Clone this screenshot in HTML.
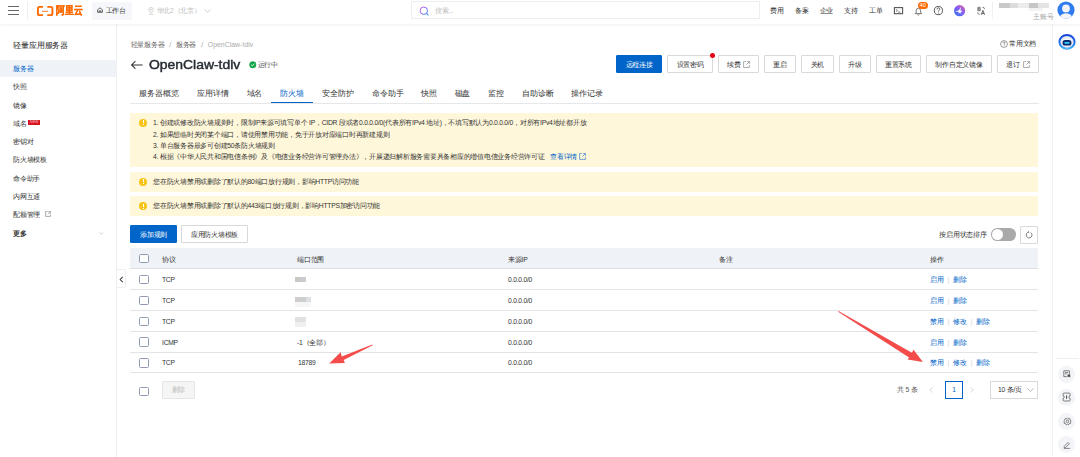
<!DOCTYPE html>
<html><head><meta charset="utf-8">
<style>
*{margin:0;padding:0;box-sizing:border-box}
html,body{width:1080px;height:457px;overflow:hidden;background:#fff}
body{font-family:"Liberation Sans",sans-serif;color:#333;position:relative;font-size:6.75px;line-height:1;letter-spacing:-0.25px}
.a{position:absolute;white-space:nowrap}
i{display:inline-block;width:1em;font-style:normal;text-align:center;letter-spacing:0}
svg.a{overflow:visible}
#top{position:absolute;left:0;top:0;width:1080px;height:24px;background:#fff;box-shadow:0 1px 3px rgba(0,0,0,.065);z-index:5}
.nav{position:absolute;top:7.9px;font-size:6.75px;color:#333}
#side{position:absolute;left:0;top:0;width:117px;height:457px;background:#fff;border-right:1px solid #eeeff1}
.si{position:absolute;left:13px;font-size:6.75px;color:#333}
#rail{position:absolute;left:1051.6px;top:24px;width:28.4px;height:433px;background:#fff;border-left:1.4px solid #f0f1f4}
.btn{position:absolute;top:55px;height:18px;border:1px solid #d9d9d9;background:#fff;font-size:6.75px;color:#333;text-align:center;line-height:17.2px;border-radius:1px}
.tab{position:absolute;top:89.6px;font-size:7.875px;color:#333;letter-spacing:0}
.alert{position:absolute;left:130px;width:908px;background:#fff7da}
.ico{position:absolute;width:8px;height:8px;border-radius:50%;background:#f9c419}
.ico:after{content:"";position:absolute;left:3.5px;top:1.7px;width:1px;height:2.7px;background:#fff}
.ico:before{content:"";position:absolute;left:3.5px;top:5.3px;width:1px;height:1px;background:#fff}
.at{position:absolute;left:153px;font-size:6.75px;color:#333}
.cb{position:absolute;left:139px;width:9.8px;height:9.4px;border:1px solid #8e9bb0;border-radius:1.6px;background:#fff}
.td{position:absolute;font-size:6.75px;color:#333}
.rl{position:absolute;left:130px;width:908px;height:1px;background:#e3e4e6}
.lk{color:#0064c8}
.sep{color:#d6d6d6;padding:0 4.1px}
.rc{position:absolute;left:1058px;width:17px;height:17px;border-radius:50%;background:#f3f4f7}
</style></head><body>

<div id="side">
  <div class="si" style="top:41.7px;font-size:7.875px;font-weight:500;color:#222;letter-spacing:0"><i>轻</i><i>量</i><i>应</i><i>用</i><i>服</i><i>务</i><i>器</i></div>
  <div class="a" style="left:0;top:59.6px;width:116px;height:17.9px;background:#eff3f8"></div>
  <div class="si" style="top:66.2px;color:#0064c8;font-weight:500"><i>服</i><i>务</i><i>器</i></div>
  <div class="si" style="top:84.4px"><i>快</i><i>照</i></div>
  <div class="si" style="top:102.6px"><i>镜</i><i>像</i></div>
  <div class="si" style="top:120.8px"><i>域</i><i>名</i></div>
  <div class="a" style="left:28.4px;top:119.8px;width:11.7px;height:5.1px;background:#d8141e;color:#f4c0d0;font-size:3.6px;line-height:5.1px;text-align:center;letter-spacing:0">NEW</div>
  <div class="si" style="top:139.2px"><i>密</i><i>钥</i><i>对</i></div>
  <div class="si" style="top:157.3px"><i>防</i><i>火</i><i>墙</i><i>模</i><i>板</i></div>
  <div class="si" style="top:175.5px"><i>命</i><i>令</i><i>助</i><i>手</i></div>
  <div class="si" style="top:193.6px"><i>内</i><i>网</i><i>互</i><i>通</i></div>
  <div class="si" style="top:211.6px"><i>配</i><i>额</i><i>管</i><i>理</i></div>
  <svg class="a" style="left:45.2px;top:211.2px" width="6" height="6" viewBox="0 0 6 6"><path d="M2.6 0.6H0.6V5.4H5.4V3.4M3.4 0.6H5.4V2.6M5.4 0.6L2.8 3.2" fill="none" stroke="#888" stroke-width="0.7"/></svg>
  <div class="si" style="top:230.7px;font-weight:bold;color:#333"><i>更</i><i>多</i></div>
  <svg class="a" style="left:98.6px;top:232.4px" width="5" height="3" viewBox="0 0 5 3"><path d="M0.5 0.5L2.3 2.3L4.1 0.5" fill="none" stroke="#b0b0b0" stroke-width="0.6"/></svg>
</div>
<!-- collapse tab -->
<div class="a" style="left:116.5px;top:269.2px;width:9.2px;height:19.2px;background:#fff;border:1px solid #eceef1;border-left:none;border-radius:0 2px 2px 0"></div>
<svg class="a" style="left:118.5px;top:275.5px" width="5" height="7" viewBox="0 0 5 7"><path d="M3.7 0.8L1.2 3.5L3.7 6.2" fill="none" stroke="#444" stroke-width="1.1"/></svg>

<div id="rail">
  <svg class="a" style="left:5px;top:9px" width="18" height="18" viewBox="0 0 18 18">
    <defs><linearGradient id="rg" x1="0" y1="0" x2="0" y2="1"><stop offset="0" stop-color="#1747d8"/><stop offset="0.55" stop-color="#1f6cf0"/><stop offset="1" stop-color="#3fb2f8"/></linearGradient></defs>
    <ellipse cx="9" cy="8.9" rx="7.6" ry="6.9" fill="#e4e8f0" stroke="url(#rg)" stroke-width="1.9"/>
    <ellipse cx="9" cy="9.4" rx="5.4" ry="4.4" fill="#f3f5f9"/>
    <rect x="4.5" y="7.1" width="9" height="5.4" rx="2.6" fill="#0a2a72"/>
    <rect x="6.3" y="8.9" width="5.4" height="1.8" rx="0.9" fill="#31d0f6"/>
    <circle cx="9" cy="15.9" r="1" fill="#8db2f2"/>
  </svg>
  <div class="a" style="left:3px;top:334px;width:23px;height:1px;background:#eef0f2"></div>
  <div class="rc" style="left:5.5px;top:341.5px"></div>
  <svg class="a" style="left:10.5px;top:346px" width="8" height="8" viewBox="0 0 8 8"><path d="M0.8 0.8H6.4V4.2M0.8 0.8V6.6H3.8M2 2.6H5M2 4H3.6" fill="none" stroke="#555" stroke-width="0.75"/><path d="M4.6 4.4H7.2V7.4L5.9 6.5L4.6 7.4Z" fill="#444"/></svg>
  <div class="rc" style="left:5.5px;top:365px"></div>
  <svg class="a" style="left:9px;top:368px" width="10" height="10" viewBox="0 0 10 10"><path d="M2.1 1.1H7.1Q8.1 1.1 8.1 2.1V3.85A1.2 1.2 0 0 0 8.1 6.25V8Q8.1 9 7.1 9H2.1Q1.1 9 1.1 8V6.25A1.2 1.2 0 0 0 1.1 3.85V2.1Q1.1 1.1 2.1 1.1Z" fill="none" stroke="#555" stroke-width="0.75"/><path d="M4.6 3.4V6.8" stroke="#444" stroke-width="1"/></svg>
  <div class="rc" style="left:5.5px;top:388.5px"></div>
  <svg class="a" style="left:10px;top:393px" width="9" height="9" viewBox="0 0 9 9"><path d="M4.5 0.8L5.4 1.8L6.8 1.6L7 3L8.1 3.9L7.4 5.1L7.6 6.5L6.2 6.7L5.3 7.9L4.5 7.2L3.3 7.9L2.6 6.7L1.2 6.5L1.4 5.1L0.8 3.9L1.8 3L2.1 1.6L3.5 1.8Z" fill="none" stroke="#555" stroke-width="0.7"/><circle cx="4.5" cy="4.4" r="1.3" fill="none" stroke="#555" stroke-width="0.7"/></svg>
  <div class="rc" style="left:5.5px;top:412px"></div>
  <svg class="a" style="left:10.5px;top:416.5px" width="8" height="8" viewBox="0 0 8 8"><path d="M1.2 5.4L5 1.4L6.4 2.8L2.6 6.6H1.2Z" fill="none" stroke="#555" stroke-width="0.7"/><path d="M0.8 7.4H7" stroke="#555" stroke-width="0.7"/></svg>
</div>

<div id="top">
  <div class="a" style="left:8px;top:6px;width:11px;height:1.1px;background:#666"></div>
  <div class="a" style="left:8px;top:10px;width:11px;height:1.1px;background:#666"></div>
  <div class="a" style="left:8px;top:14px;width:11px;height:1.1px;background:#666"></div>
  <div class="a" style="left:27.3px;top:2px;width:0.8px;height:17px;background:#efefef"></div>
  <svg class="a" style="left:36px;top:4.5px" width="19" height="12" viewBox="0 0 19 12">
    <path d="M7 1.9H3.6Q1.9 1.9 1.9 3.6V8.4Q1.9 10.1 3.6 10.1H7" fill="none" stroke="#ff6a00" stroke-width="1.9"/>
    <path d="M11.3 1.9H14.7Q16.4 1.9 16.4 3.6V8.4Q16.4 10.1 14.7 10.1H11.3" fill="none" stroke="#ff6a00" stroke-width="1.9"/>
    <path d="M6 6.3H12.2" stroke="#ff6a00" stroke-width="0.9"/>
  </svg>
  <div class="a" style="left:55.5px;top:5px;font-size:11.2px;font-weight:bold;color:#ff6a00;-webkit-text-stroke:0.3px #ff6a00;letter-spacing:0;transform:scaleX(0.8);transform-origin:0 0"><i>阿</i><i>里</i><i>云</i></div>
  <div class="a" style="left:92px;top:2px;width:40px;height:17.5px;background:#f5f7fb;border-radius:1px"></div>
  <svg class="a" style="left:96.6px;top:7px" width="6" height="6" viewBox="0 0 6 6"><path d="M0.6 2.8L3 0.8L5.4 2.8V5.3H0.6Z M2.2 5.3V3.8H3.8V5.3" fill="none" stroke="#444" stroke-width="0.8"/></svg>
  <div class="a" style="left:105.5px;top:7.5px;font-size:6.9px;color:#333"><i>工</i><i>作</i><i>台</i></div>
  <svg class="a" style="left:147.5px;top:6.5px" width="6" height="8" viewBox="0 0 6 8"><path d="M3 6.2Q0.7 3.9 0.7 2.7A2.3 2.3 0 0 1 5.3 2.7Q5.3 3.9 3 6.2Z" fill="none" stroke="#c4c4c4" stroke-width="0.7"/><circle cx="3" cy="2.7" r="0.8" fill="none" stroke="#c4c4c4" stroke-width="0.6"/><path d="M0.8 7.3H5.2" stroke="#c4c4c4" stroke-width="0.7"/></svg>
  <div class="a" style="left:156.5px;top:7.5px;font-size:6.75px;color:#bdbdbd"><i>华</i><i>北</i>2<i>（</i><i>北</i><i>京</i><i>）</i></div>
  <svg class="a" style="left:204px;top:9px" width="7" height="4" viewBox="0 0 7 4"><path d="M0.5 0.5L3.5 3.3L6.5 0.5" fill="none" stroke="#c4c4c4" stroke-width="0.8"/></svg>
  <div class="a" style="left:411px;top:1.2px;width:349px;height:18.3px;border:1px solid #eceff2;background:#fff"></div>
  <svg class="a" style="left:418.5px;top:5.5px" width="11" height="11" viewBox="0 0 11 11"><defs><linearGradient id="sg" x1="0" y1="0" x2="1" y2="1"><stop offset="0" stop-color="#d05ce8"/><stop offset="1" stop-color="#3d7cf2"/></linearGradient></defs><circle cx="4.8" cy="4.7" r="3.7" fill="none" stroke="url(#sg)" stroke-width="1"/><path d="M7.5 7.4L9.4 9.3" stroke="#3d8cf2" stroke-width="1.1"/></svg>
  <div class="a" style="left:435px;top:7.6px;font-size:6.75px;color:#c0c0c0"><i>搜</i><i>索</i>...</div>
  <div class="nav" style="left:770px"><i>费</i><i>用</i></div>
  <div class="nav" style="left:795px"><i>备</i><i>案</i></div>
  <div class="nav" style="left:819.5px"><i>企</i><i>业</i></div>
  <div class="nav" style="left:844px"><i>支</i><i>持</i></div>
  <div class="nav" style="left:869px"><i>工</i><i>单</i></div>
  <svg class="a" style="left:893px;top:6px" width="11" height="9" viewBox="0 0 11 9"><rect x="1.4" y="1.6" width="8.2" height="6.1" fill="none" stroke="#555" stroke-width="1.1"/><path d="M3.1 3.4L4.4 4.5L3.1 5.6M5 6.1H7.4" fill="none" stroke="#555" stroke-width="0.8"/></svg>
  <svg class="a" style="left:914px;top:6.5px" width="9" height="9" viewBox="0 0 9 9"><path d="M1.2 6.6H7.6L6.6 5.4V3.6A2.2 2.3 0 0 0 2.2 3.6V5.4Z" fill="none" stroke="#555" stroke-width="0.8"/><path d="M3.4 7.6Q4.4 8.6 5.4 7.6" fill="none" stroke="#555" stroke-width="0.7"/></svg>
  <div class="a" style="left:917.8px;top:1.9px;width:9.8px;height:7px;border-radius:3.5px;background:#ff6a00;color:#fff;font-size:5.6px;line-height:7.2px;text-align:center;letter-spacing:0">40</div>
  <svg class="a" style="left:933px;top:5px" width="11" height="11" viewBox="0 0 11 11"><circle cx="5.4" cy="5.6" r="4.1" fill="none" stroke="#444" stroke-width="0.9"/><path d="M4 4.3Q4 2.9 5.4 2.9Q6.8 2.9 6.8 4.2Q6.8 5 5.6 5.6V6.6" fill="none" stroke="#444" stroke-width="0.8"/><circle cx="5.6" cy="7.9" r="0.5" fill="#444"/></svg>
  <svg class="a" style="left:954.4px;top:5px" width="12" height="12" viewBox="0 0 12 12"><defs><linearGradient id="stg" x1="1" y1="0" x2="0.2" y2="1"><stop offset="0" stop-color="#e76a86"/><stop offset="0.45" stop-color="#8d5cf0"/><stop offset="1" stop-color="#3370f6"/></linearGradient></defs><circle cx="5.6" cy="5.7" r="5.6" fill="url(#stg)"/><path d="M7.3 1.8L6.3 5.2L8.8 6.3L6.5 6.9L7.8 9.5L5.7 7.5L4.7 9.2L4.8 7L1.1 6.3L4.6 5.4Z" fill="#fff"/></svg>
  <svg class="a" style="left:976px;top:6px" width="11" height="10" viewBox="0 0 11 10"><path d="M1.4 1.6H4.6M3 0.6V1.6M1.6 2.6H4.4V4.4H1.6Z M3 2.6V5.4" fill="none" stroke="#555" stroke-width="0.7"/><path d="M6.4 1.2Q8.6 1.2 8.6 3.2M1.6 6.2Q1.6 8.4 3.8 8.4" fill="none" stroke="#555" stroke-width="0.7"/><path d="M5.2 8.8L6.9 4.4L8.6 8.8M5.8 7.4H8" fill="none" stroke="#444" stroke-width="0.8"/></svg>
  <div class="a" style="left:991.6px;top:2px;width:0.8px;height:17px;background:#f0f0f0"></div>
  <div class="a" style="left:999px;top:3px;width:11px;height:5px;background:#c9c9c9;filter:blur(0.4px)"></div>
  <div class="a" style="left:1010px;top:3px;width:8px;height:5px;background:#dcdcdc;filter:blur(0.4px)"></div>
  <div class="a" style="left:1018px;top:3px;width:11px;height:5px;background:#ececec;filter:blur(0.4px)"></div>
  <div class="a" style="left:1029px;top:3px;width:9px;height:5px;background:#c6c6c6;filter:blur(0.4px)"></div>
  <div class="a" style="left:1038px;top:3px;width:11px;height:5px;background:#e4e4e4;filter:blur(0.4px)"></div>
  <div class="a" style="left:1029px;top:8px;width:14px;height:3px;background:#f2f2f2;filter:blur(0.4px)"></div>
  <div class="a" style="left:1033px;top:14px;font-size:6.75px;color:#a6a6a6"><i>主</i><i>账</i><i>号</i></div>
  <svg class="a" style="left:1057px;top:1.1px" width="18" height="18" viewBox="0 0 18 18"><defs><clipPath id="av"><circle cx="9" cy="9" r="8.6"/></clipPath></defs><circle cx="9" cy="9" r="8.6" fill="#2f7cf0"/><g clip-path="url(#av)"><circle cx="9" cy="7.4" r="3.9" fill="#f4f4f6"/><ellipse cx="9" cy="17.5" rx="6.6" ry="5.2" fill="#f4f4f6"/></g></svg>
</div>

<!-- content header -->
<div class="a" style="left:130.5px;top:42.1px;font-size:6.75px;color:#666"><i>轻</i><i>量</i><i>服</i><i>务</i><i>器</i><span style="padding:0 5px;color:#999">/</span><i>服</i><i>务</i><i>器</i><span style="padding:0 5px;color:#999">/</span><span style="color:#aaa;letter-spacing:0.1px">OpenClaw-tdlv</span></div>
<svg class="a" style="left:130px;top:59.8px" width="14" height="10" viewBox="0 0 14 10"><path d="M12.6 4.9H1.8M5.4 1.1L1.6 4.9L5.4 8.7" fill="none" stroke="#333" stroke-width="1.05"/></svg>
<div class="a" style="left:148.8px;top:60.1px;font-size:11.9px;font-weight:normal;color:#262b33;letter-spacing:0;-webkit-text-stroke:0.4px #262b33;transform:scaleX(1.17);transform-origin:0 0">OpenClaw-tdlv</div>
<svg class="a" style="left:248.6px;top:61px" width="8" height="8" viewBox="0 0 8 8"><circle cx="3.8" cy="3.7" r="3.5" fill="#1aa64a"/><path d="M2.1 3.8L3.3 4.9L5.5 2.6" fill="none" stroke="#fff" stroke-width="0.8"/></svg>
<div class="a" style="left:257.6px;top:61.6px;font-size:6.75px;color:#555"><i>运</i><i>行</i><i>中</i></div>

<div class="btn" style="left:616px;width:46px;background:#0064c8;border-color:#0064c8;color:#fff"><i>远</i><i>程</i><i>连</i><i>接</i></div>
<div class="btn" style="left:667px;width:46px"><i>设</i><i>置</i><i>密</i><i>码</i></div>
<div class="a" style="left:709.6px;top:52.6px;width:5px;height:5px;border-radius:50%;background:#e60012"></div>
<div class="btn" style="left:717.5px;width:41.5px;text-align:left;padding-left:8.5px"><i>续</i><i>费</i></div>
<svg class="a" style="left:742.5px;top:60.5px" width="7" height="7" viewBox="0 0 7 7"><path d="M3 0.6H0.6V6.4H6.4V4M4 0.6H6.4V3M6.4 0.6L3.4 3.6" fill="none" stroke="#888" stroke-width="0.7"/></svg>
<div class="btn" style="left:764px;width:32.3px"><i>重</i><i>启</i></div>
<div class="btn" style="left:801.3px;width:32.3px"><i>关</i><i>机</i></div>
<div class="btn" style="left:838.5px;width:32.3px"><i>升</i><i>级</i></div>
<div class="btn" style="left:875.5px;width:45.5px"><i>重</i><i>置</i><i>系</i><i>统</i></div>
<div class="btn" style="left:926px;width:66.2px"><i>制</i><i>作</i><i>自</i><i>定</i><i>义</i><i>镜</i><i>像</i></div>
<div class="btn" style="left:996.5px;width:42.3px;text-align:left;padding-left:8.8px"><i>退</i><i>订</i></div>
<svg class="a" style="left:1022.5px;top:60.5px" width="7" height="7" viewBox="0 0 7 7"><path d="M3 0.6H0.6V6.4H6.4V4M4 0.6H6.4V3M6.4 0.6L3.4 3.6" fill="none" stroke="#888" stroke-width="0.7"/></svg>

<svg class="a" style="left:999.5px;top:40px" width="8" height="8" viewBox="0 0 8 8"><circle cx="4" cy="4" r="3.4" fill="none" stroke="#555" stroke-width="0.6"/><path d="M2.9 3.1Q2.9 2.1 4 2.1Q5.1 2.1 5.1 3Q5.1 3.6 4.1 4V4.7" fill="none" stroke="#555" stroke-width="0.6"/><circle cx="4.1" cy="5.7" r="0.35" fill="#555"/></svg>
<div class="a" style="left:1009px;top:41px;font-size:6.75px;color:#333"><i>常</i><i>用</i><i>文</i><i>档</i></div>

<div class="tab" style="left:139px"><i>服</i><i>务</i><i>器</i><i>概</i><i>览</i></div>
<div class="tab" style="left:197px"><i>应</i><i>用</i><i>详</i><i>情</i></div>
<div class="tab" style="left:246.5px"><i>域</i><i>名</i></div>
<div class="tab" style="left:280px;color:#0064c8"><i>防</i><i>火</i><i>墙</i></div>
<div class="tab" style="left:322px"><i>安</i><i>全</i><i>防</i><i>护</i></div>
<div class="tab" style="left:372px"><i>命</i><i>令</i><i>助</i><i>手</i></div>
<div class="tab" style="left:421px"><i>快</i><i>照</i></div>
<div class="tab" style="left:454.5px"><i>磁</i><i>盘</i></div>
<div class="tab" style="left:488px"><i>监</i><i>控</i></div>
<div class="tab" style="left:522px"><i>自</i><i>助</i><i>诊</i><i>断</i></div>
<div class="tab" style="left:571px"><i>操</i><i>作</i><i>记</i><i>录</i></div>
<div class="a" style="left:130px;top:103.2px;width:908.5px;height:1px;background:#e6e7e9"></div>
<div class="a" style="left:271px;top:101.6px;width:42.2px;height:1.8px;background:#0064c8"></div>

<!-- alerts -->
<div class="alert" style="top:112.5px;height:54px"></div>
<div class="ico" style="left:139.4px;top:118.5px"></div>
<div class="at" style="top:120.2px">1. <i>创</i><i>建</i><i>或</i><i>修</i><i>改</i><i>防</i><i>火</i><i>墙</i><i>规</i><i>则</i><i>时</i><i>，</i><i>限</i><i>制</i>IP<i>来</i><i>源</i><i>可</i><i>填</i><i>写</i><i>单</i><i>个</i> IP<i>，</i>CIDR <i>段</i><i>或</i><i>者</i>0.0.0.0/0(<i>代</i><i>表</i><i>所</i><i>有</i>IPv4 <i>地</i><i>址</i>)<i>，</i><i>不</i><i>填</i><i>写</i><i>默</i><i>认</i><i>为</i>0.0.0.0/0<i>，</i><i>对</i><i>所</i><i>有</i>IPv4<i>地</i><i>址</i><i>都</i><i>开</i><i>放</i></div>
<div class="at" style="top:131.6px">2. <i>如</i><i>果</i><i>想</i><i>临</i><i>时</i><i>关</i><i>闭</i><i>某</i><i>个</i><i>端</i><i>口</i><i>，</i><i>请</i><i>使</i><i>用</i><i>禁</i><i>用</i><i>功</i><i>能</i><i>，</i><i>免</i><i>于</i><i>开</i><i>放</i><i>对</i><i>应</i><i>端</i><i>口</i><i>时</i><i>再</i><i>新</i><i>建</i><i>规</i><i>则</i></div>
<div class="at" style="top:142.8px">3. <i>单</i><i>台</i><i>服</i><i>务</i><i>器</i><i>最</i><i>多</i><i>可</i><i>创</i><i>建</i>50<i>条</i><i>防</i><i>火</i><i>墙</i><i>规</i><i>则</i></div>
<div class="at" style="top:154.2px">4. <i>根</i><i>据</i><i>《</i><i>中</i><i>华</i><i>人</i><i>民</i><i>共</i><i>和</i><i>国</i><i>电</i><i>信</i><i>条</i><i>例</i><i>》</i><i>及</i><i>《</i><i>电</i><i>信</i><i>业</i><i>务</i><i>经</i><i>营</i><i>许</i><i>可</i><i>管</i><i>理</i><i>办</i><i>法</i><i>》</i><i>，</i><i>开</i><i>展</i><i>递</i><i>归</i><i>解</i><i>析</i><i>服</i><i>务</i><i>需</i><i>要</i><i>具</i><i>备</i><i>相</i><i>应</i><i>的</i><i>增</i><i>值</i><i>电</i><i>信</i><i>业</i><i>务</i><i>经</i><i>营</i><i>许</i><i>可</i><i>证</i><span class="lk" style="margin-left:5.5px"><i>查</i><i>看</i><i>详</i><i>情</i></span></div>
<svg class="a" style="left:579px;top:153px" width="7" height="7" viewBox="0 0 7 7"><path d="M3 0.6H0.6V6.4H6.4V4M4 0.6H6.4V3M6.4 0.6L3.4 3.6" fill="none" stroke="#3b7fd0" stroke-width="0.7"/></svg>

<div class="alert" style="top:171.8px;height:19.8px"></div>
<div class="ico" style="left:139.4px;top:177.7px"></div>
<div class="at" style="top:178.5px"><i>您</i><i>在</i><i>防</i><i>火</i><i>墙</i><i>禁</i><i>用</i><i>或</i><i>删</i><i>除</i><i>了</i><i>默</i><i>认</i><i>的</i>80<i>端</i><i>口</i><i>放</i><i>行</i><i>规</i><i>则</i><i>，</i><i>影</i><i>响</i>HTTP<i>访</i><i>问</i><i>功</i><i>能</i></div>

<div class="alert" style="top:196.4px;height:20px"></div>
<div class="ico" style="left:139.4px;top:202.3px"></div>
<div class="at" style="top:203px"><i>您</i><i>在</i><i>防</i><i>火</i><i>墙</i><i>禁</i><i>用</i><i>或</i><i>删</i><i>除</i><i>了</i><i>默</i><i>认</i><i>的</i>443<i>端</i><i>口</i><i>放</i><i>行</i><i>规</i><i>则</i><i>，</i><i>影</i><i>响</i>HTTPS<i>加</i><i>密</i><i>访</i><i>问</i><i>功</i><i>能</i></div>

<!-- toolbar -->
<div class="btn" style="left:130.4px;top:225.4px;width:46.4px;height:18.1px;background:#0064c8;border-color:#0064c8;color:#fff"><i>添</i><i>加</i><i>规</i><i>则</i></div>
<div class="btn" style="left:181px;top:225.4px;width:67px;height:18.1px"><i>应</i><i>用</i><i>防</i><i>火</i><i>墙</i><i>模</i><i>板</i></div>
<div class="a" style="left:939.3px;top:232.2px;font-size:6.75px;color:#333"><i>按</i><i>启</i><i>用</i><i>状</i><i>态</i><i>排</i><i>序</i></div>
<div class="a" style="left:991px;top:228.3px;width:25px;height:12.6px;border-radius:6.3px;background:#a9a9a9"></div>
<div class="a" style="left:991.8px;top:229.1px;width:11px;height:11px;border-radius:50%;background:#fff"></div>
<div class="btn" style="left:1020.2px;top:225.5px;width:18.2px;height:18.2px"></div>
<svg class="a" style="left:1025px;top:231px" width="8" height="8" viewBox="0 0 8 8"><path d="M5.55 1.49A2.9 2.9 0 1 1 3.6 1.14" fill="none" stroke="#555" stroke-width="0.75"/><path d="M3 0.3L4 1.1L3.1 2" fill="none" stroke="#555" stroke-width="0.6"/></svg>

<!-- table -->
<div class="a" style="left:130px;top:248px;width:908px;height:20.3px;background:#eff2f6"></div>
<div class="rl" style="top:268px;background:#dcdfe4"></div>
<div class="cb" style="top:254px"></div>
<div class="td" style="left:162px;top:256.5px"><i>协</i><i>议</i></div>
<div class="td" style="left:297px;top:256.5px"><i>端</i><i>口</i><i>范</i><i>围</i></div>
<div class="td" style="left:508px;top:256.5px"><i>来</i><i>源</i>IP</div>
<div class="td" style="left:719px;top:256.5px"><i>备</i><i>注</i></div>
<div class="td" style="left:930px;top:256.5px"><i>操</i><i>作</i></div>
<div class="cb" style="top:275.0px"></div>
<div class="td" style="left:162px;top:277.1px">TCP</div>
<div class="a" style="left:295px;top:276.8px;width:5.5px;height:5.3px;background:#cbc8c8;filter:blur(0.3px)"></div><div class="a" style="left:300.5px;top:276.8px;width:5.5px;height:5.3px;background:#c9ccd0;filter:blur(0.3px)"></div>
<div class="td" style="left:508px;top:277.1px">0.0.0.0/0</div>
<div class="td" style="left:930px;top:277.1px"><span class="lk"><i>启</i><i>用</i></span><span class="sep">|</span><span class="lk"><i>删</i><i>除</i></span></div>
<div class="rl" style="top:289.2px"></div>
<div class="cb" style="top:295.8px"></div>
<div class="td" style="left:162px;top:297.9px">TCP</div>
<div class="a" style="left:295px;top:297px;width:5.4px;height:5.2px;background:#d0cdcd;filter:blur(0.3px)"></div><div class="a" style="left:300.3px;top:297px;width:5.4px;height:5.2px;background:#cbd0cf;filter:blur(0.3px)"></div><div class="a" style="left:305.6px;top:297px;width:5.4px;height:5.2px;background:#dde0e2;filter:blur(0.3px)"></div><div class="a" style="left:295px;top:302.2px;width:16px;height:5px;background:#f6f6f6;filter:blur(0.3px)"></div>
<div class="td" style="left:508px;top:297.9px">0.0.0.0/0</div>
<div class="td" style="left:930px;top:297.9px"><span class="lk"><i>启</i><i>用</i></span><span class="sep">|</span><span class="lk"><i>删</i><i>除</i></span></div>
<div class="rl" style="top:310.1px"></div>
<div class="cb" style="top:316.6px"></div>
<div class="td" style="left:162px;top:318.7px">TCP</div>
<div class="a" style="left:295px;top:317.4px;width:5.5px;height:5px;background:#e2dfe0;filter:blur(0.3px)"></div><div class="a" style="left:300.5px;top:317.4px;width:5.5px;height:5px;background:#dfe2e6;filter:blur(0.3px)"></div><div class="a" style="left:295px;top:322.4px;width:11px;height:5px;background:#f0f0f0;filter:blur(0.3px)"></div>
<div class="td" style="left:508px;top:318.7px">0.0.0.0/0</div>
<div class="td" style="left:930px;top:318.7px"><span class="lk"><i>禁</i><i>用</i></span><span class="sep">|</span><span class="lk"><i>修</i><i>改</i></span><span class="sep">|</span><span class="lk"><i>删</i><i>除</i></span></div>
<div class="rl" style="top:331px"></div>
<div class="cb" style="top:337.4px"></div>
<div class="td" style="left:162px;top:339.5px">ICMP</div>
<div class="td" style="left:297px;top:339.5px">-1<i>（</i><i>全</i><i>部</i><i>）</i></div>
<div class="td" style="left:508px;top:339.5px">0.0.0.0/0</div>
<div class="td" style="left:930px;top:339.5px"><span class="lk"><i>启</i><i>用</i></span><span class="sep">|</span><span class="lk"><i>删</i><i>除</i></span></div>
<div class="rl" style="top:351.6px"></div>
<div class="cb" style="top:358.2px"></div>
<div class="td" style="left:162px;top:360.3px">TCP</div>
<div class="td" style="left:298px;top:360.3px">18789</div>
<div class="td" style="left:508px;top:360.3px">0.0.0.0/0</div>
<div class="td" style="left:930px;top:360.3px"><span class="lk"><i>禁</i><i>用</i></span><span class="sep">|</span><span class="lk"><i>修</i><i>改</i></span><span class="sep">|</span><span class="lk"><i>删</i><i>除</i></span></div>
<div class="rl" style="top:372.2px"></div>
<!-- footer -->
<div class="cb" style="top:386.5px"></div>
<div class="btn" style="left:162.2px;top:381.2px;width:32.4px;height:17.6px;background:#f5f5f5;border-color:#e6e6e6;color:#bbb;line-height:16.8px"><i>删</i><i>除</i></div>
<div class="td" style="left:897px;top:386.5px;color:#555"><i>共</i> 5 <i>条</i></div>
<svg class="a" style="left:929px;top:386.5px" width="4" height="6" viewBox="0 0 4 6"><path d="M3.4 0.4L0.8 3L3.4 5.6" fill="none" stroke="#c8c8c8" stroke-width="0.7"/></svg>
<div class="a" style="left:945px;top:381.2px;width:18px;height:17.7px;border:1px solid #0064c8;color:#0064c8;font-size:6.75px;text-align:center;line-height:15.7px">1</div>
<svg class="a" style="left:970px;top:386.5px" width="4" height="6" viewBox="0 0 4 6"><path d="M0.6 0.4L3.2 3L0.6 5.6" fill="none" stroke="#c8c8c8" stroke-width="0.7"/></svg>
<div class="a" style="left:990.2px;top:381.2px;width:48.2px;height:17.7px;border:1px solid #d9d9d9"></div>
<div class="td" style="left:998px;top:386.5px;color:#333">10 <i>条</i>/<i>页</i></div>
<svg class="a" style="left:1027px;top:388px" width="7" height="4" viewBox="0 0 7 4"><path d="M0.5 0.5L3.5 3.4L6.5 0.5" fill="none" stroke="#999" stroke-width="0.7"/></svg>
<!-- arrows -->
<svg class="a" style="left:0;top:0" width="1080" height="457" viewBox="0 0 1080 457">
<polygon fill="#f44b4b" points="372.3,344.5 341.8,356.6 340.6,352.3 329.2,363.6 344.9,363 343.6,359.9 372.7,345.3"/>
<polygon fill="#f44b4b" points="838.5,311 911.9,352.8 913.5,349.7 922.9,361.9 907.6,359.5 909.1,357.6 838.1,311.8"/>
</svg>
</body></html>
